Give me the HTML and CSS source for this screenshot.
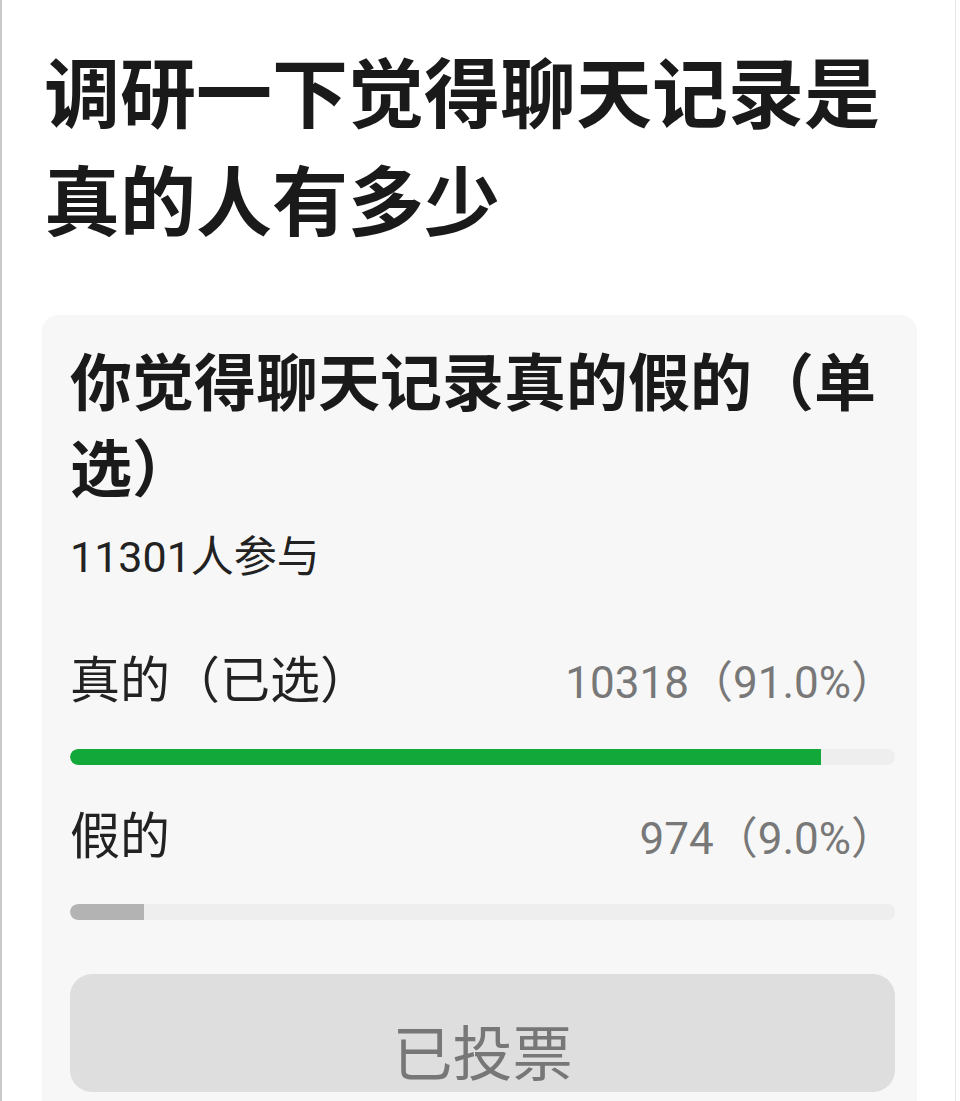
FILE: index.html
```html
<!DOCTYPE html>
<html lang="zh-CN">
<head>
<meta charset="utf-8">
<title>调研</title>
<link rel="stylesheet" href="styles.css">
</head>
<body>
<div class="page">
  <h1 class="title">调研一下觉得聊天记录是真的人有多少</h1>
  <div class="card">
    <h2 class="q">你觉得聊天记录真的假的（单选）</h2>
    <div class="count">11301人参与</div>
    <div class="opt">
      <span class="label">真的（已选）</span>
      <span class="num">10318（91.0%）</span>
    </div>
    <div class="track"><div class="fill green" style="width:91%"></div></div>
    <div class="opt opt2">
      <span class="label">假的</span>
      <span class="num">974（9.0%）</span>
    </div>
    <div class="track"><div class="fill grey" style="width:9%"></div></div>
    <div class="btn">已投票</div>
  </div>
</div>
</body>
</html>
```
FILE: styles.css
```css
html, body {
  margin: 0;
  padding: 0;
  background: #ffffff;
}
body {
  font-family: Roboto, "Noto Sans CJK SC", sans-serif;
  color: #1c1c1c;
}
.page {
  width: 956px;
  height: 1101px;
  box-sizing: border-box;
  border-left: 2px solid #c9c9c9;
  border-right: 1px solid #e6e6e6;
  overflow: hidden;
  padding-top: 35px;
}
.title {
  margin: 0 0 0 42px;
  width: 860px;
  font-family: "Noto Sans CJK SC", sans-serif;
  font-size: 76px;
  font-weight: 700;
  line-height: 108px;
  color: #1a1a1a;
}
.card {
  margin: 64px 0 0 40px;
  width: 875px;
  box-sizing: border-box;
  padding: 21px 22px 40px 28px;
  background: #f7f7f7;
  border-radius: 16px;
}
.q {
  margin: 0;
  font-family: "Noto Sans CJK SC", sans-serif;
  font-size: 62px;
  font-weight: 700;
  line-height: 86px;
  color: #1a1a1a;
}
.count {
  margin-top: 21px;
  font-size: 43px;
  line-height: 56px;
  color: #222;
}
.opt {
  margin-top: 61px;
  display: flex;
  justify-content: space-between;
  align-items: baseline;
  line-height: 70px;
}
.opt2 {
  margin-top: 37px;
}
.label {
  font-size: 50px;
  color: #222;
}
.num {
  font-size: 44px;
  color: #787878;
}
.track {
  margin-top: 31px;
  height: 16px;
  border-radius: 8px;
  background: #eeeeee;
  overflow: hidden;
}
.opt2 + .track {
  margin-top: 30px;
}
.fill {
  height: 100%;
  border-radius: 8px 0 0 8px;
}
.green {
  background: #13a83a;
}
.grey {
  background: #b3b3b3;
}
.btn {
  margin-top: 54px;
  height: 118px;
  box-sizing: border-box;
  padding-top: 46px;
  border-radius: 22px;
  background: #dedede;
  text-align: center;
  font-family: "Noto Sans CJK SC", sans-serif;
  font-size: 60px;
  line-height: 60px;
  color: #777;
}
```
